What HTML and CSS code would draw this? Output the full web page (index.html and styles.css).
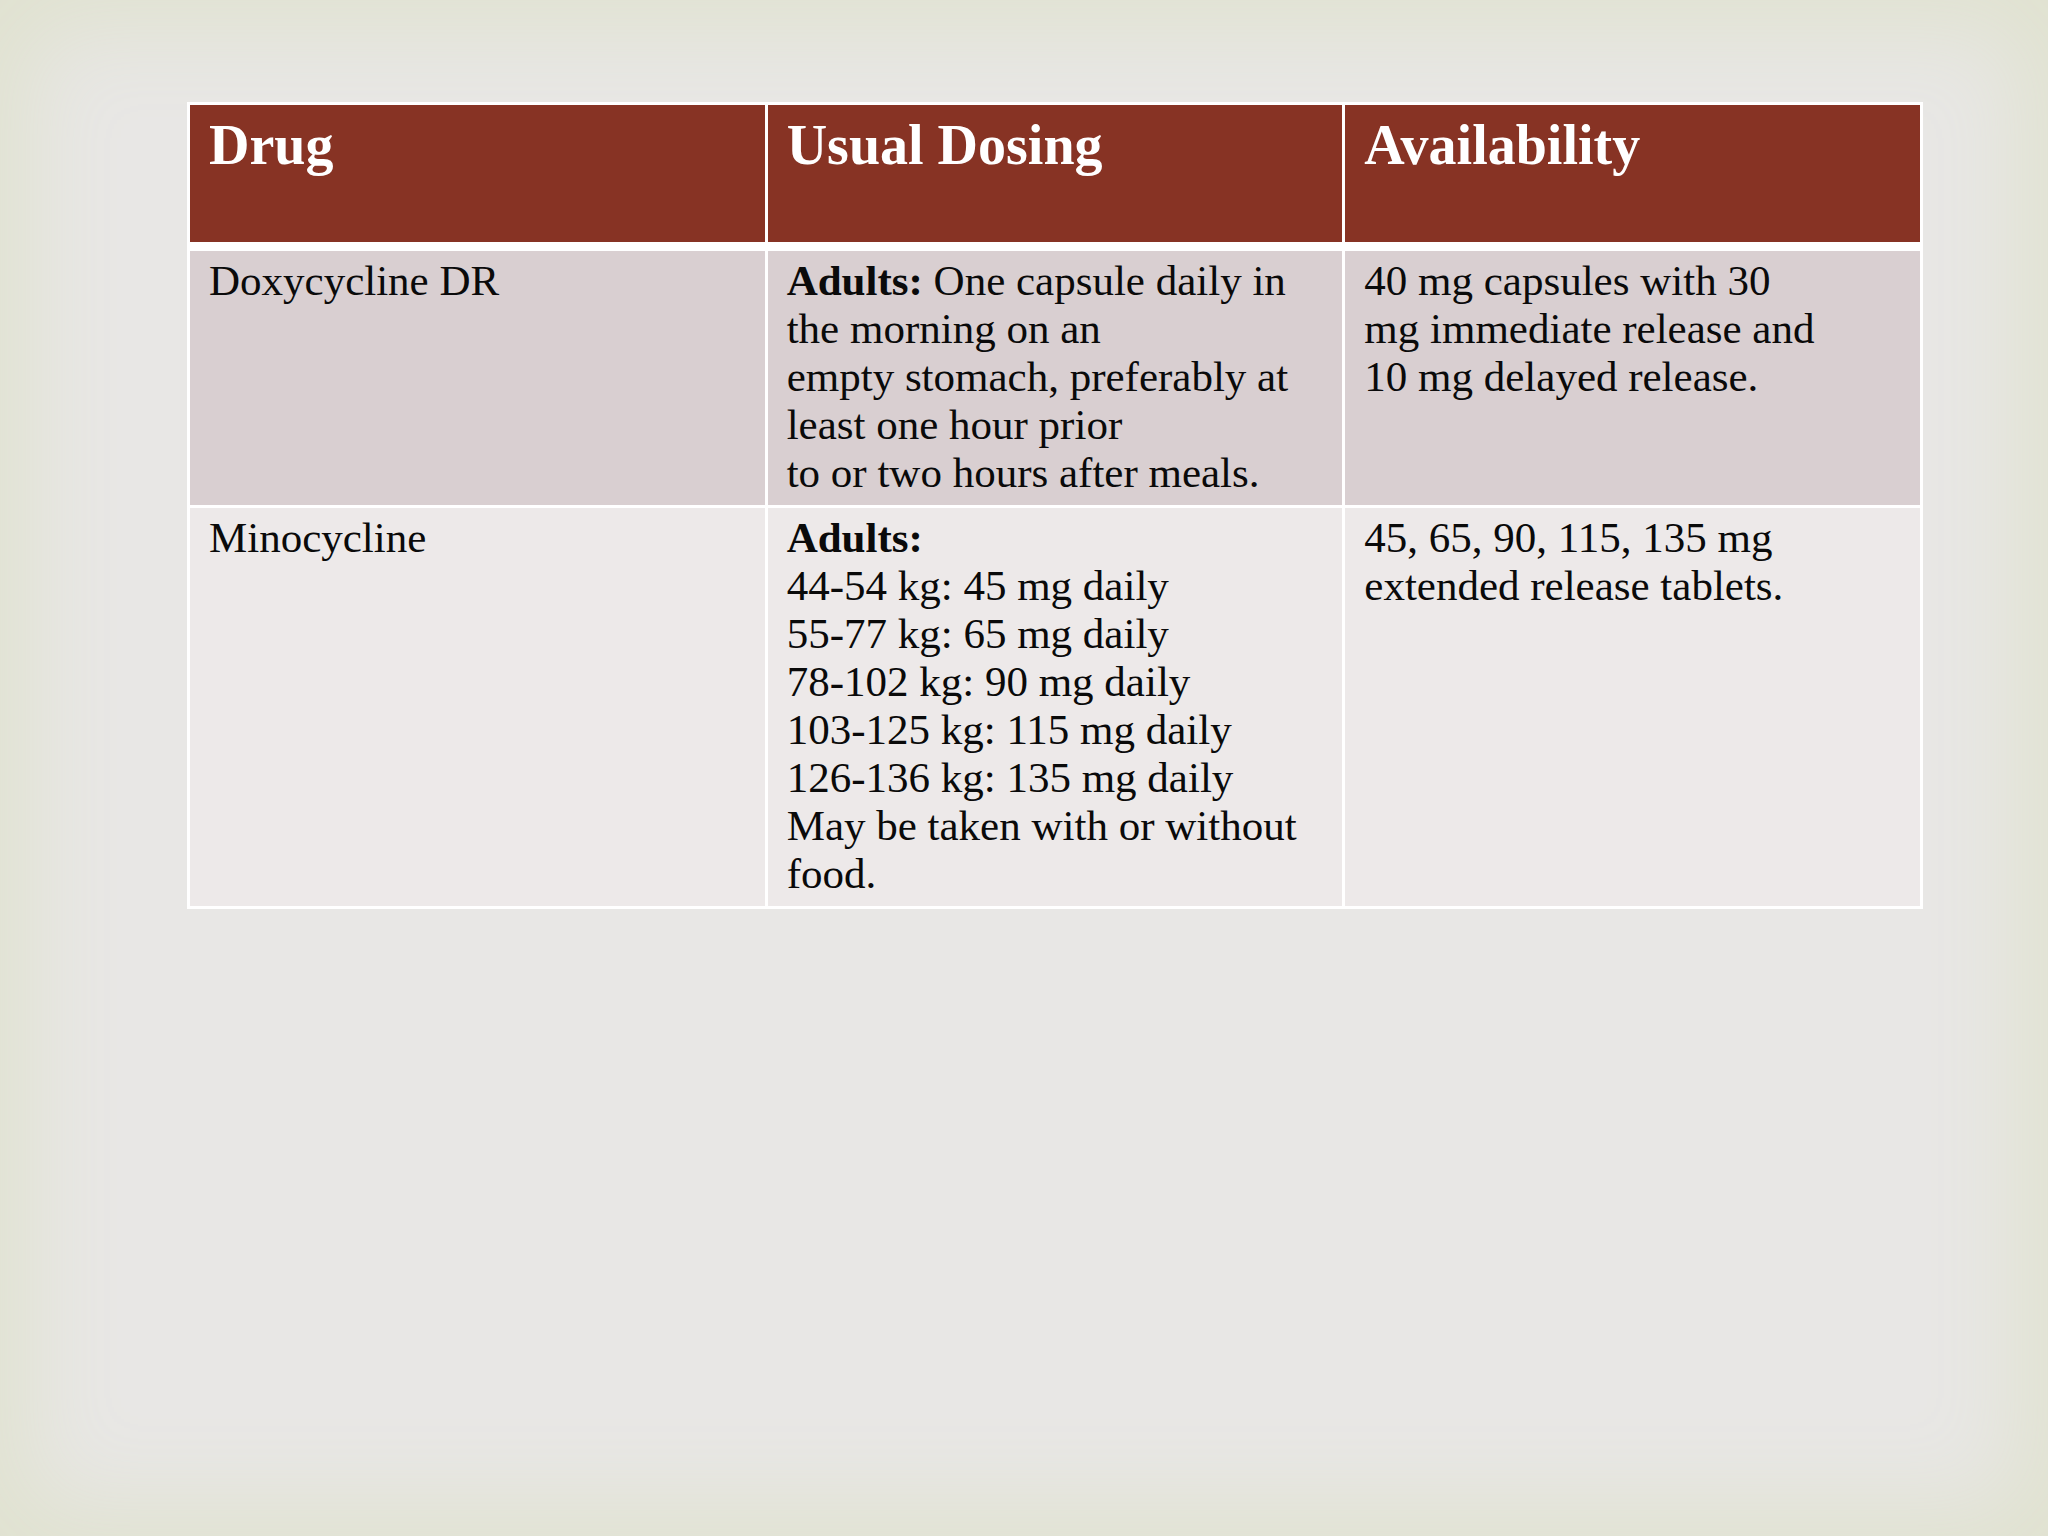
FILE: index.html
```html
<!DOCTYPE html>
<html>
<head>
<meta charset="utf-8">
<link rel="stylesheet" href="styles.css">
</head>
<body>
<div class="slide">
  <table class="drugs">
    <colgroup>
      <col class="col">
      <col class="col">
      <col class="col">
    </colgroup>
    <thead>
      <tr>
        <th>Drug</th>
        <th>Usual Dosing</th>
        <th>Availability</th>
      </tr>
    </thead>
    <tbody>
      <tr class="row-a">
        <td>Doxycycline DR</td>
        <td><b>Adults:</b> One capsule daily in<br>the morning on an<br>empty stomach, preferably at<br>least one hour prior<br>to or two hours after meals.</td>
        <td>40 mg capsules with 30<br>mg immediate release and<br>10 mg delayed release.</td>
      </tr>
      <tr class="row-b">
        <td>Minocycline</td>
        <td><b>Adults:</b><br>44-54 kg: 45 mg daily<br>55-77 kg: 65 mg daily<br>78-102 kg: 90 mg daily<br>103-125 kg: 115 mg daily<br>126-136 kg: 135 mg daily<br>May be taken with or without<br>food.</td>
        <td>45, 65, 90, 115, 135 mg<br>extended release tablets.</td>
      </tr>
    </tbody>
  </table>
</div>
</body>
</html>
```
FILE: styles.css
```css
html, body {
  margin: 0;
  padding: 0;
}

body {
  background: #e8e7e5;
}

.slide {
  width: 2048px;
  height: 1536px;
  box-sizing: border-box;
  padding: 102px 125px 0 187px;
  background: #e8e7e5;
  box-shadow: inset 0 0 90px 30px #e0e2d0;
  overflow: hidden;
}

.drugs {
  width: 1736px;
  border-collapse: collapse;
  table-layout: fixed;
  font-family: "Liberation Serif", "Times New Roman", serif;
  color: #0a0a0a;
}

.col {
  width: 33.333%;
}

.drugs th {
  background: #873324;
  color: #ffffff;
  font-size: 56px;
  font-weight: bold;
  line-height: 67px;
  text-align: left;
  vertical-align: top;
  padding: 7px 19px 63px;
  border: 3px solid #ffffff;
  border-bottom: 9px solid #ffffff;
}

.drugs td {
  font-size: 43px;
  line-height: 48px;
  vertical-align: top;
  white-space: nowrap;
  padding: 6px 19px 8px;
  border: 3px solid #ffffff;
}

.row-a td {
  background: #d9cfd1;
}

.row-b td {
  background: #ede9e9;
  padding-bottom: 8px;
}
```
